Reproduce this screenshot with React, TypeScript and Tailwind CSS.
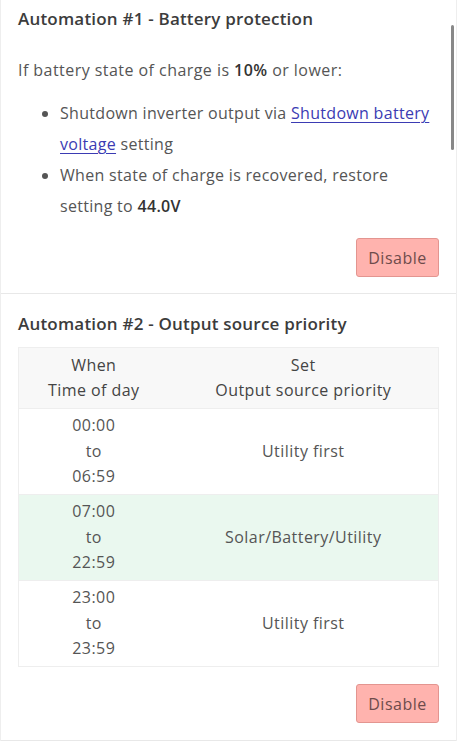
const rows = [
  { from: '00:00', to: '06:59', set: 'Utility first', active: false },
  { from: '07:00', to: '22:59', set: 'Solar/Battery/Utility', active: true },
  { from: '23:00', to: '23:59', set: 'Utility first', active: false },
];

function DisableButton() {
  return (
    <div className="flex justify-end">
      <button className="h-[39px] w-[83px] rounded-[3px] border border-[#e39590] bg-[#ffb3ae] text-[16px] tracking-[0.5px] text-[#6e4b4b]">
        Disable
      </button>
    </div>
  );
}

export default function App() {
  return (
    <div
      className="relative h-[750px] overflow-hidden bg-white text-[16px] tracking-[0.45px] text-[#555]"
      style={{ fontFamily: '"Open Sans", "Liberation Sans", sans-serif' }}
    >
      <div className="border-x border-[#eee]">
        {/* Automation 1 */}
        <section className="h-[294px] border-b border-[#e8e8e8] px-[17px] pt-[7px]">
          <h2 className="text-[17px] font-semibold leading-[24px] tracking-[0.2px] text-[#3c3c3c]">
            Automation #1 - Battery protection
          </h2>
          <p className="mt-[24px] leading-[31px]">
            If battery state of charge is <b className="font-semibold text-[#333]">10%</b> or lower:
          </p>
          <ul className="mt-[12px] list-disc pl-[42px] pr-[1px] leading-[31px] tracking-[0.3px] marker:text-[#555]">
            <li>
              Shutdown inverter output via{' '}
              <a className="text-[#3b3bb3] underline underline-offset-[3px]">Shutdown battery voltage</a> setting
            </li>
            <li>
              When state of charge is recovered, restore setting to{' '}
              <b className="font-semibold text-[#333]">44.0V</b>
            </li>
          </ul>
          <div className="mt-[16px]">
            <DisableButton />
          </div>
        </section>

        {/* Automation 2 */}
        <section className="h-[447px] border-b border-[#e8e8e8] px-[17px] pt-[18px]">
          <h2 className="text-[17px] font-semibold leading-[24px] tracking-[0.2px] text-[#3c3c3c]">
            Automation #2 - Output source priority
          </h2>
          <table className="mt-[11px] w-full border border-[#eee] text-center leading-[25.5px]">
            <thead>
              <tr className="h-[61px] bg-[#f8f8f8] font-medium text-[#444]">
                <th className="w-[150px] font-medium">
                  When
                  <br />
                  Time of day
                </th>
                <th className="font-medium">
                  Set
                  <br />
                  Output source priority
                </th>
              </tr>
            </thead>
            <tbody>
              {rows.map((r) => (
                <tr
                  key={r.from}
                  className={`h-[86px] border-t border-[#eee] ${r.active ? 'bg-[#eaf8ef]' : 'bg-white'}`}
                >
                  <td>
                    {r.from}
                    <br />
                    to
                    <br />
                    {r.to}
                  </td>
                  <td>{r.set}</td>
                </tr>
              ))}
            </tbody>
          </table>
          <div className="mt-[17px]">
            <DisableButton />
          </div>
        </section>
      </div>

      {/* overlay scrollbar */}
      <div className="absolute right-[3px] top-[25px] h-[125px] w-[3px] rounded-full bg-[#888]" />
    </div>
  );
}
